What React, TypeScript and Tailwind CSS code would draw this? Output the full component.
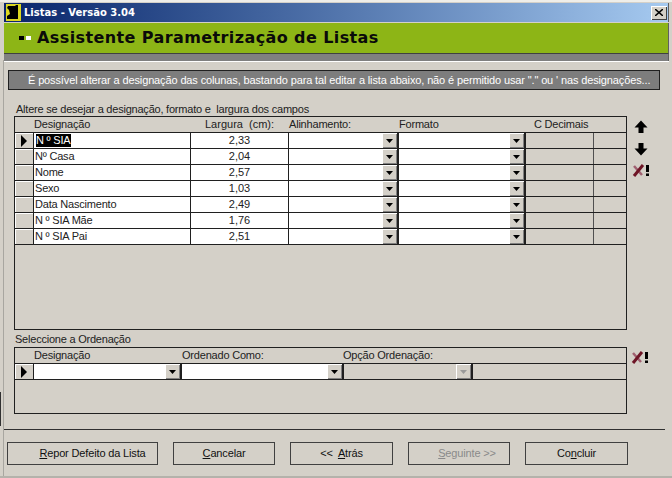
import React from 'react';

const rows = [
  ['N º SIA', '2,33'],
  ['Nº Casa', '2,04'],
  ['Nome', '2,57'],
  ['Sexo', '1,03'],
  ['Data Nascimento', '2,49'],
  ['N º SIA Mãe', '1,76'],
  ['N º SIA Pai', '2,51'],
];

const Selector = ({ active }: { active?: boolean }) => (
  <div className="flex h-full w-[19px] shrink-0 items-center justify-center border-r border-r-[#202020] shadow-[inset_1px_1px_0_#fff]">
    {active && (
      <svg width="8" height="12" viewBox="0 0 8 12">
        <path d="M1 0 L7 6 L1 12 Z" fill="#000" />
      </svg>
    )}
  </div>
);

const Combo = ({ width, disabled }: { width: string; disabled?: boolean }) => (
  <div className={`flex h-full shrink-0 justify-end border-r-2 border-r-[#202020] ${width} ${disabled ? '' : 'bg-white'}`}>
    <div className="flex h-full w-[15px] items-center justify-center bg-[#d4d0c8] shadow-[inset_1px_1px_0_#fff,inset_-1px_-1px_0_#808080]">
      <svg width="7" height="4" viewBox="0 0 7 4">
        <path d="M0 0 H7 L3.5 4 Z" fill={disabled ? '#9a9a9a' : '#000'} />
      </svg>
    </div>
  </div>
);

const IconUp = () => (
  <svg width="14" height="14" viewBox="0 0 14 14">
    <path d="M7 0.5 L13.5 7.5 H9.5 V13 H4.5 V7.5 H0.5 Z" fill="#000" />
  </svg>
);

const IconDown = () => (
  <svg width="14" height="14" viewBox="0 0 14 14">
    <path d="M7 13.5 L13.5 6.5 H9.5 V1 H4.5 V6.5 H0.5 Z" fill="#000" />
  </svg>
);

const IconDelete = () => (
  <svg width="18" height="13" viewBox="0 0 18 13">
    <path d="M2 2 L10 11" stroke="#a06070" strokeWidth="2.5" />
    <path d="M11 1 L2 12" stroke="#6e1526" strokeWidth="3" />
    <rect x="14" y="1" width="3" height="7" fill="#000" />
    <rect x="14" y="9.5" width="3" height="2.5" fill="#000" />
  </svg>
);

const Btn = ({ children, width, disabled, pad }: { children: React.ReactNode; width: string; disabled?: boolean; pad?: string }) => (
  <div className={`flex h-[23px] items-center justify-center border border-[#404040] pb-px tracking-[-0.15px] ${width} ${pad ?? ''} ${disabled ? 'text-[#8a8a8a]' : 'text-[#111]'}`}>
    {children}
  </div>
);

export default function App() {
  return (
    <div className="flex h-[478px] w-[672px] flex-col overflow-hidden bg-[#d4d0c8] pl-[4px] pr-[3px] pt-[3px] text-[11px] leading-none text-[#222] shadow-[inset_0_2px_0_#efeee9,inset_0_-2px_0_#b4b2ab] [font-family:'Liberation_Sans',sans-serif]">
      {/* barra de titulo */}
      <div className="flex h-[19px] shrink-0 items-center justify-between border-r border-r-[#606060] bg-gradient-to-r from-[#0a246a] to-[#a6caf0] pr-[1px]">
        <div className="flex items-center gap-[3px] pl-[2px]">
          <svg width="15" height="17" viewBox="0 0 15 17">
            <rect width="15" height="17" fill="#dcd820" />
            <path d="M2 2 H9 L10 1 H12 V15 H1 V12 L4 10 L3 6 L1 4 Z" fill="#000" />
          </svg>
          <span className="text-[10px] font-bold text-white [font-family:'DejaVu_Sans',sans-serif]">Listas - Versão 3.04</span>
        </div>
        <div className="flex h-[14px] w-[16px] items-center justify-center bg-[#d4d0c8] shadow-[inset_1px_1px_0_#fff,inset_-1px_-1px_0_#404040]">
          <svg width="8" height="7" viewBox="0 0 8 7">
            <path d="M0 0 L8 7 M8 0 L0 7" stroke="#000" strokeWidth="1.5" />
          </svg>
        </div>
      </div>

      {/* cabecalho verde */}
      <div className="mt-px flex h-[31px] shrink-0 items-center gap-[2px] border-r border-b border-r-[#606060] border-b-[#404040] bg-[#8db516] pl-[15px]">
        <span className="h-[4px] w-[5px] bg-black" />
        <span className="h-[4px] w-[5px] bg-white" />
        <span className="ml-[4px] text-[16px] font-bold tracking-[0.4px] text-[#0a0a0a] [font-family:'DejaVu_Sans',sans-serif]">
          Assistente Parametrização de Listas
        </span>
      </div>
      <div className="h-[7px] shrink-0 border-r border-r-[#606060] bg-[#808080]" />
      <div className="h-px shrink-0 bg-white" />

      {/* aviso */}
      <div className="ml-[4px] mt-[8px] flex h-[20px] w-[652px] shrink-0 items-center whitespace-nowrap border border-[#202020] bg-[#7d7d7d] pl-[19px] tracking-[-0.13px] text-white">
        É possível alterar a designação das colunas, bastando para tal editar a lista abaixo, não é permitido usar "." ou ' nas designações...
      </div>

      <div className="ml-[12px] mt-[13px] h-[13px] shrink-0 pt-px tracking-[-0.22px]">Altere se desejar a designação, formato e&nbsp; largura dos campos</div>

      {/* grelha de campos */}
      <div className="ml-[10px] h-[214px] w-[613px] shrink-0 border border-[#202020]">
        <div className="flex h-[16px] items-center border-b border-b-[#202020] pb-px tracking-[-0.2px]">
          <div className="w-[19px]" />
          <div className="w-[157px]">Designação</div>
          <div className="w-[98px] pl-[14px] tracking-normal">Largura&nbsp; (cm):</div>
          <div className="w-[110px]">Alinhamento:</div>
          <div className="w-[127px]">Formato</div>
          <div className="pl-[8px]">C Decimais</div>
        </div>
        {rows.map(([name, size], i) => (
          <div key={name} className="flex h-[16px] items-stretch border-b border-b-[#202020]">
            <Selector active={i === 0} />
            <div className="flex w-[157px] shrink-0 items-center border-r border-r-[#202020] bg-white pb-px tracking-[-0.2px] text-[#222]">
              {i === 0 ? <span className="ml-[2px] bg-black py-[1px] pr-px text-white">{name}</span> : <span className="pl-px">{name}</span>}
            </div>
            <div className="flex w-[98px] shrink-0 items-center justify-center border-r border-r-[#202020] bg-white pb-px">{size}</div>
            <Combo width="w-[110px]" />
            <Combo width="w-[127px]" />
            <div className="w-[68px] shrink-0 border-r border-r-[#505050]" />
          </div>
        ))}
      </div>

      {/* segunda grelha */}
      <div className="ml-[11px] mt-[4px] h-[13px] shrink-0 tracking-[-0.22px]">Seleccione a Ordenação</div>
      <div className="ml-[10px] h-[67px] w-[613px] shrink-0 border border-[#202020]">
        <div className="flex h-[16px] items-center border-b border-b-[#202020] pb-px tracking-[-0.2px]">
          <div className="w-[19px]" />
          <div className="w-[148px]">Designação</div>
          <div className="w-[162px]">Ordenado Como:</div>
          <div className="-ml-px">Opção Ordenação:</div>
        </div>
        <div className="flex h-[16px] items-stretch border-b border-b-[#202020]">
          <Selector active />
          <Combo width="w-[148px]" />
          <Combo width="w-[162px]" />
          <Combo width="w-[129px]" disabled />
        </div>
      </div>

      <div className="mt-[15px] h-px w-[661px] shrink-0 bg-[#303030]" />

      {/* botoes */}
      <div className="ml-[3px] mt-[12px] flex shrink-0 gap-[15px]">
        <Btn width="w-[151px]" pad="pl-[20px]"><span><u>R</u>epor Defeito da Lista</span></Btn>
        <Btn width="w-[102px]"><span><u>C</u>ancelar</span></Btn>
        <Btn width="w-[103px]"><span>&lt;&lt;&nbsp; <u>A</u>trás</span></Btn>
        <Btn width="w-[102px]" pad="pl-[16px]" disabled><span><u>S</u>eguinte &gt;&gt;</span></Btn>
        <Btn width="w-[103px]"><span>Co<u>n</u>cluir</span></Btn>
      </div>

      {/* icones laterais */}
      <div className="absolute left-[634px] top-[120px] flex w-[14px] flex-col items-center gap-[8px]">
        <IconUp />
        <IconDown />
        <IconDelete />
      </div>
      <div className="absolute left-[631px] top-[351px]">
        <IconDelete />
      </div>
      {/* restos da janela de tras */}
      <div className="absolute left-[3px] top-[60px] h-[416px] w-px bg-[#a8a6a0]" />
      <div className="absolute left-0 top-[392px] h-[34px] w-px bg-[#303030]" />
    </div>
  );
}
